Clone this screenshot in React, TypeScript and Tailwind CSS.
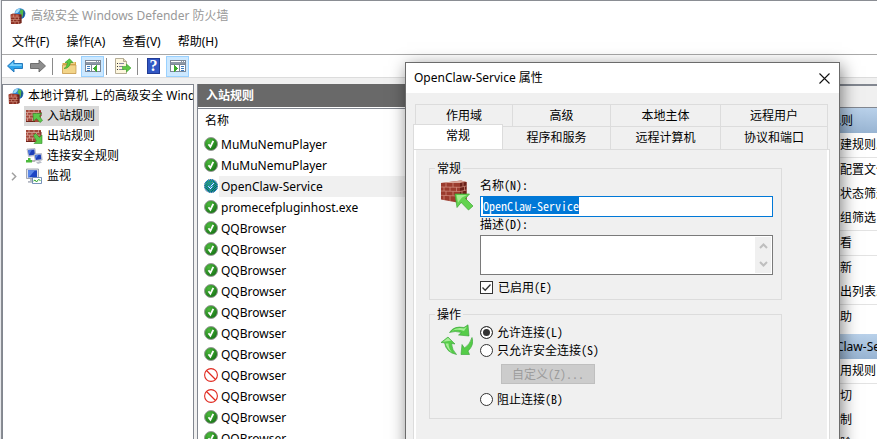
import { useEffect, useRef, type ReactNode } from 'react'
import clsx from 'clsx'

const rules = [
  { name: 'MuMuNemuPlayer', allow: true },
  { name: 'MuMuNemuPlayer', allow: true },
  { name: 'OpenClaw-Service', allow: true, selected: true },
  { name: 'promecefpluginhost.exe', allow: true },
  { name: 'QQBrowser', allow: true },
  { name: 'QQBrowser', allow: true },
  { name: 'QQBrowser', allow: true },
  { name: 'QQBrowser', allow: true },
  { name: 'QQBrowser', allow: true },
  { name: 'QQBrowser', allow: true },
  { name: 'QQBrowser', allow: true },
  { name: 'QQBrowser', allow: false },
  { name: 'QQBrowser', allow: false },
  { name: 'QQBrowser', allow: true },
  { name: 'QQBrowser', allow: true },
]

function FirewallIcon() {
  return (
    <svg width="16" height="16" viewBox="0 0 16 16" className="shrink-0">
      <circle cx="10" cy="5.6" r="5.4" fill="#2b7fd0" />
      <path d="M5.5 3.5Q7 .8 10 .6L9.5 3 7.5 5 5 5.5z" fill="#9fdcf5" />
      <path d="M11 1l3 2 1 3-2 3-2-1V6L9.500 4.500z" fill="#54b948" />
      <path d="M13.500 2l1.500 3-1 4-1.500 1.500 .5-4z" fill="#1d4f9c" />
      <path d="M.5 6.500L3 5.500l8.500 1V15L9 16H1z" fill="#8c2f22" />
      <path d="M1 6.500h8V9H1z" fill="#b04a38" />
      <path d="M1 9.200h9.500M1 11.500h9.500M1 13.700h9.500M3.500 6.500v2.700M7 6.500v2.700M5 9.200v2.300M8.500 9.200v2.300M3.500 11.500v2.200M7 11.500v2.200M5 13.700V16M8.500 13.700V16" stroke="#d99a88" strokeWidth=".6" />
      <path d="M9.500 6.700h2V15l-2 .8z" fill="#5c1c14" opacity=".6" />
    </svg>
  )
}

function BrickIcon({ outbound }: { outbound?: boolean }) {
  return (
    <svg width="17" height="16" viewBox="0 0 17 16" className="shrink-0">
      <path d="M0 2h15v12H0z" fill="#a5483a" />
      <path d="M0 4.500h15M0 7.200h15M0 10h15M3 2v2.500M8 2v2.500M12.500 2v2.500M1.500 4.500v2.700M6 4.500v2.700M10.500 4.500v2.700M3.500 7.200V10M8.500 7.200V10M1.500 10v3M6.500 10v3" stroke="#d6a398" strokeWidth=".8" />
      <path d="M0 13.500h9M13 4h2v4" stroke="#6f2219" strokeWidth="1" fill="none" />
      {outbound ? (
        <path d="M7.500 7.500l2-2 4 4L16 7v8.500H8L10.500 13z" fill="#5cc84a" stroke="#2f8f2a" strokeWidth=".6" />
      ) : (
        <path d="M7 5.500h8.500L13.300 8l3.200 4.500-2.500 2-3.500-4L7.500 13z" fill="#5cc84a" stroke="#2f8f2a" strokeWidth=".6" />
      )}
    </svg>
  )
}

function ConnectionIcon() {
  return (
    <svg width="17" height="16" viewBox="0 0 17 16" className="shrink-0">
      <path d="M1 1l8-.5.8 7-7.300 1z" fill="#d7dbe6" stroke="#8a8f9c" strokeWidth=".5" />
      <path d="M2 2l6.300-.5.7 5.200-6 .8z" fill="#1d3fb8" />
      <path d="M2 2l4-.3-3 5z" fill="#4d78e0" />
      <path d="M8 6l7.500-.5.7 6.500-7 1z" fill="#d7dbe6" stroke="#8a8f9c" strokeWidth=".5" />
      <path d="M9 7l5.800-.4.5 4.600-5.500.8z" fill="#1d3fb8" />
      <path d="M9 7l3.600-.2-3 4z" fill="#4d78e0" />
      <path d="M10 14.500l4-1.500 2 1.500-4 1.500z" fill="#b9bdc8" />
      <path d="M2 10h2.500v2H6v2.500H0V12h2z" fill="#4cba3c" />
      <path d="M6 13h3" stroke="#777" />
    </svg>
  )
}

function MonitorIcon() {
  return (
    <svg width="17" height="16" viewBox="0 0 17 16" className="shrink-0">
      <path d="M.5 1h12v9.500H.5z" fill="#dfe3ec" stroke="#8f94a2" strokeWidth=".8" />
      <path d="M2 2.300h9v7H2z" fill="#1c45c4" />
      <path d="M2 2.300h7L3 9.300H2z" fill="#5b88e8" />
      <path d="M4 11h5v2H4zM2 13h7v1.800H2z" fill="#b5b9c4" />
      <path d="M6.500 9.500h9v6h-9z" fill="#fff" stroke="#5577aa" strokeWidth=".8" />
      <path d="M7.500 13l1.500-1 1.500 2 2-2.500 2 1" fill="none" stroke="#2da62a" strokeWidth="1" />
    </svg>
  )
}

function ArrowIcon({ forward }: { forward?: boolean }) {
  return (
    <svg width="16" height="14" viewBox="0 0 16 14">
      {forward ? (
        <path d="M15.500 7L9 1v3.500H.5v5H9V13z" fill="#8d8d8d" stroke="#666" strokeWidth=".9" />
      ) : (
        <>
          <path d="M.5 7L7 1v3.500h8.500v5H7V13z" fill="#2ea3ea" stroke="#1b6fb5" strokeWidth=".9" />
          <path d="M2 7l4.200-4v2.300h8.500V7z" fill="#7fd0fa" />
        </>
      )}
    </svg>
  )
}

function FolderUpIcon() {
  return (
    <svg width="16" height="16" viewBox="0 0 16 16">
      <path d="M1.500 5h5V4H15v11.500H1.500z" fill="#dba94a" />
      <path d="M1.500 7H15v8.500H1.500z" fill="#f2d488" stroke="#c2954a" strokeWidth=".7" />
      <path d="M9 5h5" stroke="#fff3c4" />
      <path d="M3 10.500Q6 9.500 6.500 4.500H4L8.500.8 12 4.500H9.500Q8.500 10.500 3 10.500z" fill="#5ccb3e" stroke="#2c9427" strokeWidth=".6" />
    </svg>
  )
}

function PaneIcon({ right }: { right?: boolean }) {
  return (
    <svg width="16" height="14" viewBox="0 0 16 14" shapeRendering="crispEdges">
      <path d="M0 1h16v12H0z" fill="#fff" />
      <path d="M0 1h16v4H0z" fill="#8e98a6" />
      <path d="M1 2h10v1H1zM12 2h1v1h-1zM14 2h1v1h-1z" fill="#fff" />
      <path d="M.5 1.500h15v11H.5zM0 5.500h16" fill="none" stroke="#7b8796" />
      {right ? (
        <>
          <path d="M9.500 5v8" stroke="#7b8796" />
          <path d="M11 7.500h3M11 9.500h3M11 11.500h3" stroke="#3d7cc0" />
          <path d="M4 6l4 3.500L4 13z" fill="#3bab2c" />
        </>
      ) : (
        <>
          <path d="M6.500 5v8" stroke="#7b8796" />
          <path d="M2 7.500h3M2 9.500h3M2 11.500h3" stroke="#3d7cc0" />
          <path d="M12 6L8 9.500 12 13z" fill="#3bab2c" />
        </>
      )}
    </svg>
  )
}

function ExportIcon() {
  return (
    <svg width="16" height="16" viewBox="0 0 16 16">
      <path d="M.5.5h8L11.500 3.500v12H.5z" fill="#fdf6dd" stroke="#a39a80" strokeWidth=".8" />
      <path d="M8.500.5v3h3" fill="#e4dcc0" stroke="#a39a80" strokeWidth=".8" />
      <path d="M2 5.500h1M2 8.500h1M2 11.500h1" stroke="#333" />
      <path d="M4 5.500h5M4 8.500h4M4 11.500h5" stroke="#7b7b9a" strokeWidth=".9" />
      <path d="M7.500 8.500h4V6L16 10l-4.500 4v-2.500h-4z" fill="#5fca45" stroke="#3ba02f" strokeWidth=".6" />
    </svg>
  )
}

function HelpIcon() {
  return (
    <span className="flex h-4 w-[13px] items-center justify-center border border-[#203a94] bg-[#3157c4] font-['Liberation_Serif',serif] text-base leading-4 font-bold text-white">
      ?
    </span>
  )
}

function AllowIcon({ selected }: { selected?: boolean }) {
  return (
    <svg width="14" height="14" viewBox="0 0 14 14" className="shrink-0">
      <defs>
        <radialGradient id="allow" cx=".35" cy=".3" r=".8">
          <stop offset="0" stopColor="#4cb83c" />
          <stop offset="1" stopColor="#126e12" />
        </radialGradient>
        <pattern id="dither" width="2" height="2" patternUnits="userSpaceOnUse">
          <path d="M0 0h1v1H0zM1 1h1v1H1z" fill="#0078d7" shapeRendering="crispEdges" />
        </pattern>
      </defs>
      <circle cx="7" cy="7" r="6.500" fill="url(#allow)" stroke="#9a9a9a" strokeWidth="1" />
      <path d="M4.500 7.300l1.900 2.500L9.300 3.800" fill="none" stroke="#fff" strokeWidth="1.800" />
      {selected && <circle cx="7" cy="7" r="7" fill="url(#dither)" />}
    </svg>
  )
}

function BlockIcon() {
  return (
    <svg width="14" height="14" viewBox="0 0 14 14" className="shrink-0">
      <circle cx="7" cy="7" r="6.400" fill="#fff" stroke="#e02a20" strokeWidth="1.100" />
      <path d="M2.500 2.500l9 9" stroke="#e02a20" strokeWidth="1.200" />
    </svg>
  )
}

function WallIcon() {
  return (
    <svg width="32" height="32" viewBox="0 0 32 32" className="shrink-0">
      <path d="M0 4L20 1.500 25.500 3v19L19 24 0 20.500z" fill="#9b3b2d" />
      <path d="M0 4L20 1.500 25.500 3 19 4z" fill="#d8a497" />
      <path d="M19 4l6.500-1v19L19 24z" fill="#6a2018" />
      <path d="M0 8l19 .3 6.500-1.300M0 12l19 .5 6.500-1.500M0 16.300l19 .8 6.500-1.700M5 4v4M12 4v4.200M3 8v4M9 8v4.200M15.500 8.200v4.200M5 12v4.500M12 12.300v4.500M3 16.500V21M9 16.700V22M22 3.500v4M23.500 7.500v4M21 12v4.500M23.500 16v5" stroke="#d59485" strokeWidth=".7" fill="none" />
      <path d="M14 15h14.500l-4 4.500L32 27l-4.500 4-7.300-7.500-4.200 5z" fill="#63d34f" stroke="#3ea534" strokeWidth=".7" />
      <path d="M15.500 16h10.500l-5 2.500-4 5z" fill="#a4ee8f" />
    </svg>
  )
}

function RecycleIcon() {
  return (
    <svg width="32" height="32" viewBox="0 0 32 32" className="shrink-0">
      <g fill="#55cc48" stroke="#36a135" strokeWidth=".6">
        <path d="M8.500 8.500Q13 1.500 23 3.500L27 .8 28 12 17.500 11 20.500 8.500Q14 6.500 8.500 8.500z" />
        <path d="M31 13.500Q33.500 21 27 27l1.500 3.500L20 30.500 21 20.500l2.500 3.500Q29 20.500 31 13.500z" />
        <path d="M0 18.500L7 13l7 7-3.500-.5Q11 26 15.500 30.500 5 28.500 3.500 18.800z" />
      </g>
      <path d="M10.500 7Q16 2.500 23 4.500l3-2-3 4.500Q16 4.500 10.500 7zM2 17.800l5-4 3 3zM4.500 19.500q2 6 6.500 9-3.500-4-3.500-9z" fill="#a5ee96" />
    </svg>
  )
}

function MenuItem({ children }: { children: ReactNode }) {
  return <button className="px-2 leading-6">{children}</button>
}

function TreeItem({ icon, label, selected, expandable }: { icon: ReactNode; label: string; selected?: boolean; expandable?: boolean }) {
  return (
    <li className="flex h-5 items-center">
      <span className="flex w-[21px] justify-center">
        {expandable && (
          <svg width="6" height="9" viewBox="0 0 6 9">
            <path d="M1 .8l3.700 3.700L1 8.200" fill="none" stroke="#a0a0a0" strokeWidth="1.500" />
          </svg>
        )}
      </span>
      <span className={clsx('flex h-5 items-center gap-1 pr-1 pl-0.5', selected && 'bg-[#d9d9d9]')}>
        {icon}
        {label}
      </span>
    </li>
  )
}

function ActionTitle({ children }: { children: ReactNode }) {
  return (
    <h3 className="h-[25px] bg-linear-to-b from-[#b9d1ea] to-[#98b4d2] pl-1 leading-[25px]">{children}</h3>
  )
}

function ActionGroup({ items }: { items: string[] }) {
  return (
    <ul className="border-b border-[#e3e3e3]">
      {items.map((item) => (
        <li key={item} className="h-6 pl-[27px] leading-6">{item}</li>
      ))}
    </ul>
  )
}

function Tab({ children, active }: { children: ReactNode; active?: boolean }) {
  return (
    <button
      role="tab"
      aria-selected={!!active}
      className={clsx(
        'border-t border-r border-[#dcdcdc] text-center',
        active ? '-mt-0.5 -ml-0.5 border-l bg-white pb-0.5' : 'bg-[#f0f0f0]'
      )}
    >
      {children}
    </button>
  )
}

function Radio({ id, label, checked }: { id: string; label: string; checked?: boolean }) {
  return (
    <div className="flex h-[18px] items-center gap-1">
      <input
        type="radio"
        id={id}
        name="action"
        defaultChecked={checked}
        className="size-[13px] appearance-none rounded-full border border-[#333] bg-white checked:bg-[#333] checked:shadow-[inset_0_0_0_2px_#fff]"
      />
      <label htmlFor={id}>{label}</label>
    </div>
  )
}

function PropertiesDialog() {
  const nameRef = useRef<HTMLInputElement>(null)

  useEffect(() => {
    nameRef.current?.focus()
    nameRef.current?.select()
  }, [])

  return (
    <div
      role="dialog"
      aria-label="OpenClaw-Service 属性"
      className="absolute top-[62px] left-[405px] w-[435px] border border-[#6b6b6b] bg-[#f0f0f0] shadow-[2px_4px_16px_rgba(0,0,0,0.5)]"
    >
      <div className="flex h-[30px] items-center justify-between bg-white pr-[9px] pl-2">
        <h2>OpenClaw-Service 属性</h2>
        <button aria-label="关闭">
          <svg width="11" height="11" viewBox="0 0 11 11">
            <path d="M.5.5l10 10M10.500.5l-10 10" stroke="#111" strokeWidth="1.100" />
          </svg>
        </button>
      </div>

      <div className="px-[7px] pt-[11px]">
        <div role="tablist" className="pr-1 pl-0.5">
          <div className="grid h-[22px] grid-cols-[97px_98px_110px_1fr] border-l border-[#dcdcdc]">
            <Tab>作用域</Tab>
            <Tab>高级</Tab>
            <Tab>本地主体</Tab>
            <Tab>远程用户</Tab>
          </div>
          <div className="grid h-[23px] grid-cols-[88px_108px_110px_1fr]">
            <Tab active>常规</Tab>
            <Tab>程序和服务</Tab>
            <Tab>远程计算机</Tab>
            <Tab>协议和端口</Tab>
          </div>
        </div>

        <div className="mr-0.5 border border-[#dcdcdc]">
          <div className="flex flex-col gap-1.5 border-x-2 border-white pt-2.5 pr-[45px] pb-24 pl-[13px] font-['Noto_Sans_Mono_CJK_SC','Noto_Sans_CJK_SC',monospace]">
            <fieldset className="border border-[#dcdcdc] pr-2 pb-[3px] pl-[5px]">
              <legend className="px-0.5 leading-4">常规</legend>
              <div className="flex gap-[7px] pl-1.5">
                <div className="pt-[3px]">
                  <WallIcon />
                </div>
                <div className="flex min-w-0 flex-1 flex-col">
                  <label htmlFor="rule-name" className="h-5 leading-[18px]">名称(N):</label>
                  <input
                    id="rule-name"
                    ref={nameRef}
                    defaultValue="OpenClaw-Service"
                    className="h-[21px] border border-[#0078d7] bg-white px-0.5 pb-0.5 leading-3 outline-none selection:bg-[#0078d7] selection:text-white"
                  />
                  <label htmlFor="rule-desc" className="h-[18px] leading-[14px]">描述(D):</label>
                  <div className="flex h-10 border border-[#7a7a7a] bg-white p-px">
                    <textarea id="rule-desc" className="min-w-0 flex-1 resize-none overflow-hidden outline-none" />
                    <div className="flex w-4 flex-col items-center justify-between bg-[#f0f0f0] py-1.5">
                      <svg width="9" height="6" viewBox="0 0 9 6">
                        <path d="M1 5l3.500-3.500L8 5" fill="none" stroke="#bfbfbf" strokeWidth="2" />
                      </svg>
                      <svg width="9" height="6" viewBox="0 0 9 6">
                        <path d="M1 1l3.500 3.500L8 1" fill="none" stroke="#bfbfbf" strokeWidth="2" />
                      </svg>
                    </div>
                  </div>
                  <div className="mt-[3px] flex h-[18px] items-center gap-[5px]">
                    <span className="relative flex">
                      <input
                        type="checkbox"
                        id="rule-enabled"
                        defaultChecked
                        className="peer size-[13px] appearance-none border border-[#333] bg-white"
                      />
                      <svg width="13" height="13" viewBox="0 0 13 13" className="pointer-events-none absolute inset-0 hidden peer-checked:block">
                        <path d="M2.500 6.500l2.700 2.800L10.500 3.500" fill="none" stroke="#333" strokeWidth="1.300" />
                      </svg>
                    </span>
                    <label htmlFor="rule-enabled">已启用(E)</label>
                  </div>
                </div>
              </div>
            </fieldset>

            <fieldset className="border border-[#dcdcdc] pr-2 pb-2.5 pl-[5px]">
              <legend className="px-0.5 leading-4">操作</legend>
              <div className="flex gap-[7px] pl-1.5">
                <div className="pt-0.5">
                  <RecycleIcon />
                </div>
                <div className="flex flex-col items-start pt-px">
                  <Radio id="allow-connection" label="允许连接(L)" checked />
                  <Radio id="allow-secure" label="只允许安全连接(S)" />
                  <button disabled className="mt-[5px] mb-1.5 ml-[21px] h-5 w-[94px] border border-[#bfbfbf] bg-[#ccc] leading-4 text-[#9c9c9c]">
                    自定义(Z)...
                  </button>
                  <Radio id="block-connection" label="阻止连接(B)" />
                </div>
              </div>
            </fieldset>
          </div>
        </div>
      </div>
    </div>
  )
}

export default function App() {
  return (
    <div className="relative flex h-screen overflow-hidden bg-[#e6e8ec] pl-px font-['Noto_Sans','Noto_Sans_CJK_SC',sans-serif] text-xs text-black">
      <div className="flex min-w-0 flex-1 flex-col border-t border-l border-[#8a8d93] bg-[#f0f0f0]">
        <header className="flex h-[29px] items-center gap-[5px] bg-white pl-2 text-[#999]">
          <FirewallIcon />
          <h1>高级安全 Windows Defender 防火墙</h1>
        </header>
        <nav className="flex h-[25px] gap-px border-b border-[#a8a8a8] bg-white pl-0.5">
          <MenuItem>文件(F)</MenuItem>
          <MenuItem>操作(A)</MenuItem>
          <MenuItem>查看(V)</MenuItem>
          <MenuItem>帮助(H)</MenuItem>
        </nav>
        <div className="flex h-[23px] items-center border-b border-[#dcdcdc] bg-white pl-[5px]">
          <button aria-label="后退"><ArrowIcon /></button>
          <button aria-label="前进" className="ml-[7px]"><ArrowIcon forward /></button>
          <span className="mx-[6px] h-[17px] w-px bg-[#8a8a8a]" />
          <button aria-label="上一级" className="ml-0.5"><FolderUpIcon /></button>
          <button aria-label="显示/隐藏控制台树" className="ml-1 flex h-[21px] w-[23px] items-center justify-center border border-[#99d1ff] bg-[#cce8ff]">
            <PaneIcon />
          </button>
          <span className="mr-2 ml-0.5 h-[17px] w-px bg-[#8a8a8a]" />
          <button aria-label="导出列表"><ExportIcon /></button>
          <span className="mr-[9px] ml-[6px] h-[17px] w-px bg-[#8a8a8a]" />
          <button aria-label="帮助"><HelpIcon /></button>
          <button aria-label="显示/隐藏操作窗格" className="ml-[6px] flex h-[21px] w-[23px] items-center justify-center border border-[#99d1ff] bg-[#cce8ff]">
            <PaneIcon right />
          </button>
        </div>

        <div className="flex min-h-0 flex-1 pt-1.5">
          <aside className="w-48 shrink-0 overflow-hidden border border-b-0 border-[#828790] bg-white pt-px whitespace-nowrap">
            <div className="flex h-5 items-center gap-1 pl-[5px]">
              <FirewallIcon />
              本地计算机 上的高级安全 Wind
            </div>
            <ul>
              <TreeItem icon={<BrickIcon />} label="入站规则" selected />
              <TreeItem icon={<BrickIcon outbound />} label="出站规则" />
              <TreeItem icon={<ConnectionIcon />} label="连接安全规则" />
              <TreeItem icon={<MonitorIcon />} label="监视" expandable />
            </ul>
          </aside>

          <main className="ml-[3px] flex min-w-0 flex-1 flex-col border-x border-[#828790] bg-white">
            <h2 className="h-[23px] shrink-0 bg-[#696969] pl-2 leading-[23px] font-bold text-white">入站规则</h2>
            <table className="mt-px w-full border-t border-[#828790]">
              <thead>
                <tr className="h-[25px]">
                  <th className="pl-[7px] text-left font-normal">名称</th>
                </tr>
              </thead>
              <tbody>
                {rules.map((rule, i) => (
                  <tr key={i} className="h-[21px]">
                    <td className="p-0">
                      <div className="flex h-[21px] items-center gap-px pl-1.5">
                        {rule.allow ? <AllowIcon selected={rule.selected} /> : <BlockIcon />}
                        <span className={clsx('flex-1 pl-0.5 leading-[21px]', rule.selected && 'bg-[#f0f0f0]')}>{rule.name}</span>
                      </div>
                    </td>
                  </tr>
                ))}
              </tbody>
            </table>
          </main>

          <aside className="ml-[3px] w-[77px] shrink-0 overflow-hidden border-t-2 border-l border-[#828790] bg-white whitespace-nowrap">
            <h2 className="h-[22px] border-b border-[#828790] bg-[#f0f0f0] pl-1 leading-5">操作</h2>
            <ActionTitle>入站规则</ActionTitle>
            <ActionGroup items={['新建规则...']} />
            <ActionGroup items={['按配置文件筛选', '按状态筛选', '按组筛选']} />
            <ActionGroup items={['查看']} />
            <ActionGroup items={['刷新', '导出列表...']} />
            <div className="h-[29px] pl-[27px] leading-6">帮助</div>
            <ActionTitle>OpenClaw-Service</ActionTitle>
            <ActionGroup items={['禁用规则']} />
            <ActionGroup items={['剪切', '复制', '删除']} />
          </aside>
        </div>
      </div>
      <PropertiesDialog />
    </div>
  )
}
